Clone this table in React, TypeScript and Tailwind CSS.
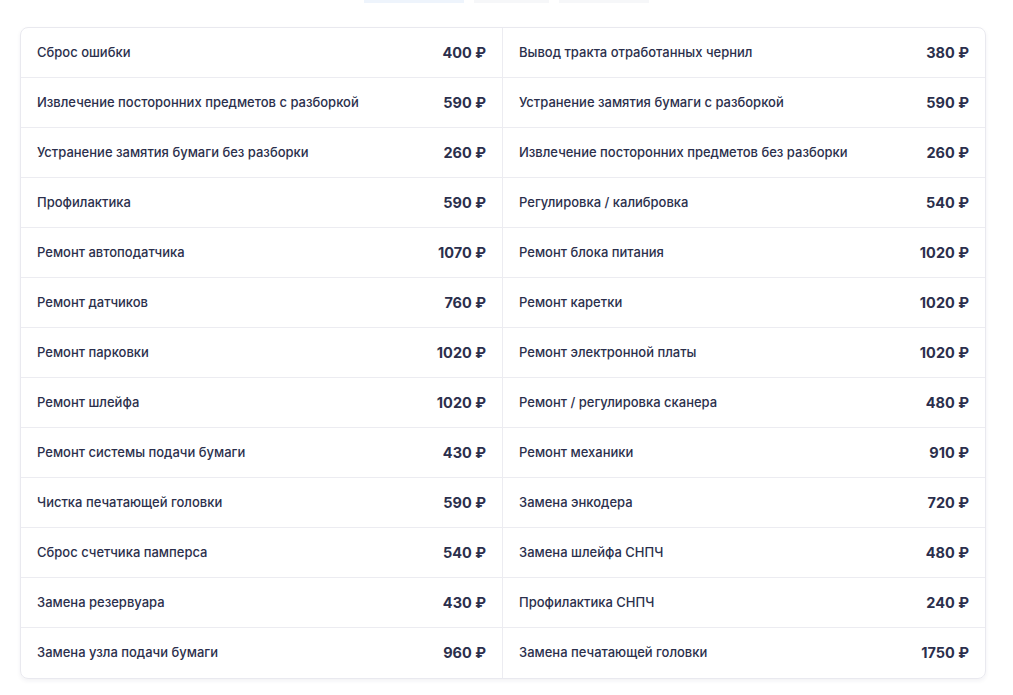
const rows: [string, string, string, string][] = [
  ['Сброс ошибки', '400 ₽', 'Вывод тракта отработанных чернил', '380 ₽'],
  ['Извлечение посторонних предметов с разборкой', '590 ₽', 'Устранение замятия бумаги с разборкой', '590 ₽'],
  ['Устранение замятия бумаги без разборки', '260 ₽', 'Извлечение посторонних предметов без разборки', '260 ₽'],
  ['Профилактика', '590 ₽', 'Регулировка / калибровка', '540 ₽'],
  ['Ремонт автоподатчика', '1070 ₽', 'Ремонт блока питания', '1020 ₽'],
  ['Ремонт датчиков', '760 ₽', 'Ремонт каретки', '1020 ₽'],
  ['Ремонт парковки', '1020 ₽', 'Ремонт электронной платы', '1020 ₽'],
  ['Ремонт шлейфа', '1020 ₽', 'Ремонт / регулировка сканера', '480 ₽'],
  ['Ремонт системы подачи бумаги', '430 ₽', 'Ремонт механики', '910 ₽'],
  ['Чистка печатающей головки', '590 ₽', 'Замена энкодера', '720 ₽'],
  ['Сброс счетчика памперса', '540 ₽', 'Замена шлейфа СНПЧ', '480 ₽'],
  ['Замена резервуара', '430 ₽', 'Профилактика СНПЧ', '240 ₽'],
  ['Замена узла подачи бумаги', '960 ₽', 'Замена печатающей головки', '1750 ₽'],
]

function Cell({ name, price, last }: { name: string; price: string; last?: boolean }) {
  return (
    <div className={'flex items-center justify-between px-[16px] ' + (last ? '' : 'border-r border-[#ececf1]')}>
      <span className="text-[13px] font-medium text-[#2b2f4c]">{name}</span>
      <span className="text-[14.5px] font-bold text-[#2b2f4c]">{price}</span>
    </div>
  )
}

export default function App() {
  return (
    <div className="min-h-[695px] bg-white font-['Inter',sans-serif]">
      <div className="flex h-[3px] justify-center gap-[10px]">
        <div className="w-[100px] bg-[#eef4fc]" />
        <div className="w-[75px] bg-[#f6f7f9]" />
        <div className="w-[90px] bg-[#f6f7f9]" />
      </div>
      <div className="px-[20px] pt-[24px]">
        <div className="w-[966px] overflow-hidden rounded-[8px] border border-[#e9e9ef] shadow-[0_2px_4px_rgba(30,40,80,0.06)]">
          {rows.map((r, i) => (
            <div
              key={i}
              className={
                'grid grid-cols-[482px_1fr] ' +
                (i < rows.length - 1 ? 'h-[50px] border-b border-[#ececf1]' : 'h-[50px]')
              }
            >
              <Cell name={r[0]} price={r[1]} />
              <Cell name={r[2]} price={r[3]} last />
            </div>
          ))}
        </div>
      </div>
    </div>
  )
}
